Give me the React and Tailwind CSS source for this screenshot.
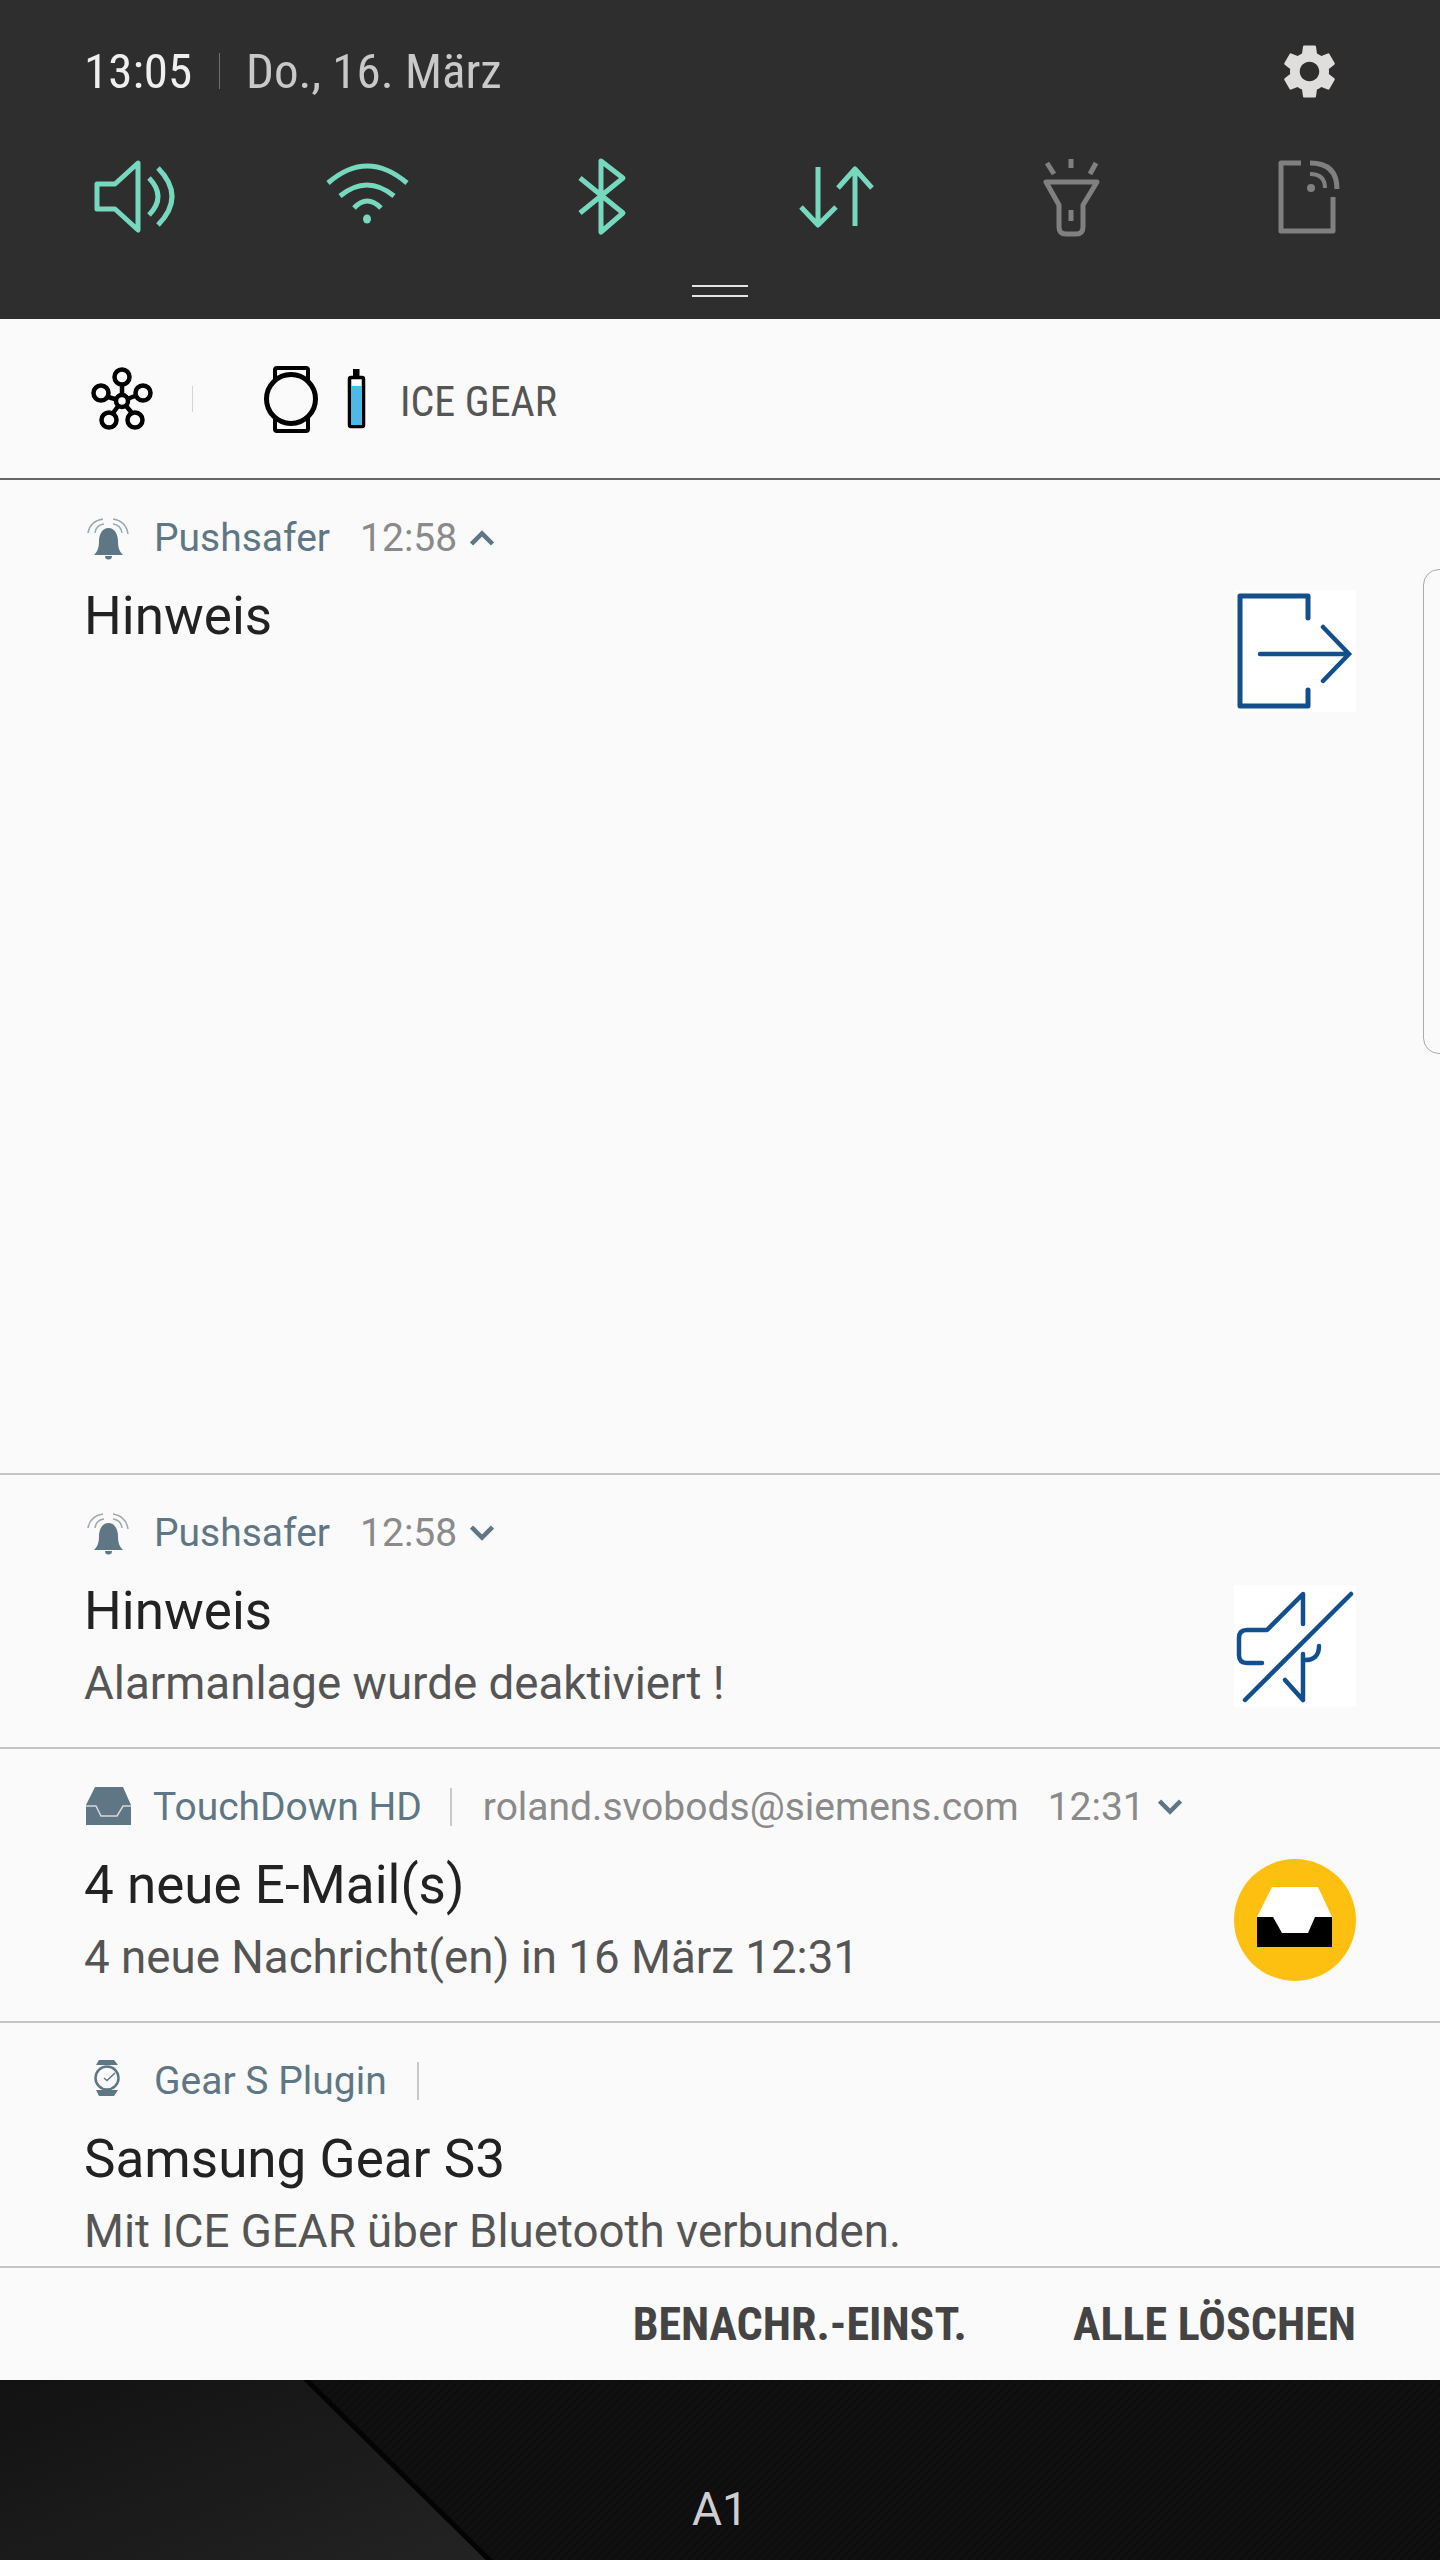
const BLUE = "#134f8c";
const SLATE = "#5f7785";
const MINT = "#76d8bd";
const GREY = "#808080";

function QuickIcon({ children, stroke }) {
  return (
    <div className="flex w-[234px] justify-center">
      <svg width="100" height="100" viewBox="0 0 100 100" fill="none" stroke={stroke} strokeWidth="5" strokeLinejoin="round">
        {children}
      </svg>
    </div>
  );
}

function Gear() {
  return (
    <svg width="65" height="65" viewBox="0 0 24 24" fill="#e0dddd">
      <path d="M19.14 12.94c.04-.3.06-.61.06-.94 0-.32-.02-.64-.07-.94l2.03-1.58a.49.49 0 0 0 .12-.61l-1.92-3.32a.488.488 0 0 0-.59-.22l-2.39.96c-.5-.38-1.03-.7-1.62-.94l-.36-2.54a.484.484 0 0 0-.48-.41h-3.84c-.24 0-.43.17-.47.41l-.36 2.54c-.59.24-1.13.57-1.62.94l-2.39-.96c-.22-.08-.47 0-.59.22L2.74 8.87c-.12.21-.08.47.12.61l2.03 1.58c-.05.3-.09.63-.09.94s.02.64.07.94l-2.03 1.58a.49.49 0 0 0-.12.61l1.92 3.32c.12.22.37.29.59.22l2.39-.96c.5.38 1.03.7 1.62.94l.36 2.54c.05.24.24.41.48.41h3.84c.24 0 .44-.17.47-.41l.36-2.54c.59-.24 1.13-.56 1.62-.94l2.39.96c.22.08.47 0 .59-.22l1.92-3.32c.12-.22.07-.47-.12-.61l-2.01-1.58zM12 15.6c-1.98 0-3.6-1.62-3.6-3.6s1.62-3.6 3.6-3.6 3.6 1.62 3.6 3.6-1.62 3.6-3.6 3.6z" />
    </svg>
  );
}

function Header() {
  return (
    <div className="h-[319px] bg-[#2e2e2e] flex flex-col">
      <div className="h-[147px] pt-[38px] pl-[84px] pr-[100px] flex items-start">
        <div className="flex items-center h-[66px] w-full">
          <span className="text-[49px] leading-[68px] mt-[2px] text-[#efefef] w-[105px] [font-stretch:75%] whitespace-nowrap">13:05</span>
          <span className="w-px h-[36px] bg-[#6f6f6f] ml-[30px]" />
          <span className="text-[49px] leading-[68px] mt-[2px] text-[#c9c9c9] ml-[26px] [font-stretch:75%] whitespace-nowrap">Do., 16. März</span>
          <div className="ml-auto -mr-[2px]"><Gear /></div>
        </div>
      </div>
      <div className="flex h-[100px] pl-[16px]">
        <QuickIcon stroke={MINT}>
          <path d="M55 16 L32 37 H14 V62 H32 L55 83 Z" />
          <path d="M66 31 Q84 49.5 66 68" />
          <path d="M75 21 Q103 49.5 75 78" />
        </QuickIcon>
        <QuickIcon stroke={MINT}>
          <path d="M11 36 Q50 2 90 36" />
          <path d="M23 49 Q50 27 77 49" />
          <path d="M37 61 Q50 47 64 61" />
          <ellipse cx="50" cy="72" rx="4" ry="4.5" fill={MINT} stroke="none" />
        </QuickIcon>
        <QuickIcon stroke={MINT}>
          <path d="M29 31 L72 66 L50 85 V14 L72 31 L29 66" />
        </QuickIcon>
        <QuickIcon stroke={MINT}>
          <path d="M33 20 V78 M16 60 L33 78 L51 60" />
          <path d="M70 22 V79 M53 41 L70 22 L87 41" />
        </QuickIcon>
        <QuickIcon stroke={GREY}>
          <path d="M52 12 V21 M28 16 L35 27 M77 16 L71 27" />
          <path d="M27 35 H78 L64 58 V80 Q64 87 57 87 H47 Q40 87 40 80 V58 Z" />
          <path d="M52 63 V74" />
        </QuickIcon>
        <QuickIcon stroke={GREY}>
          <path d="M48 16 H28 V84 H80 V50" />
          <path d="M57 16 Q84 16 84 42" />
          <path d="M57 27 Q72 27 72 41" strokeWidth="4" />
          <circle cx="58" cy="41" r="4" fill={GREY} stroke="none" />
        </QuickIcon>
      </div>
      <div className="mt-[38px] mx-auto w-[56px] h-[12px] border-y-[2px] border-[#e4e4e4]" />
    </div>
  );
}

function GearBar() {
  return (
    <div className="h-[161px] bg-[#fafafa] border-b-2 border-[#666] flex items-start pt-[40px] pl-[80px]">
      <svg width="84" height="80" viewBox="80 360 84 80" fill="none" stroke="#000" strokeWidth="4.5">
        <path d="M122 402 V385 M122 402 L135 397 M122 402 L108 398 M122 402 L113 414 M122 402 L132 414" />
        <circle cx="122" cy="402" r="6" fill="#fafafa" />
        <circle cx="122" cy="378" r="7.5" />
        <circle cx="143" cy="394" r="7.5" />
        <circle cx="101" cy="394" r="7.5" />
        <circle cx="109" cy="421" r="7.5" />
        <circle cx="135" cy="421" r="7.5" />
      </svg>
      <span className="w-px h-[26px] bg-[#d4d4d4] ml-[28px] mt-[27px]" />
      <svg width="120" height="80" viewBox="255 360 120 80" fill="none" stroke="#000" className="ml-[62px]">
        <rect x="275" y="369" width="33" height="63" rx="2" strokeWidth="4" />
        <circle cx="291" cy="400" r="24.5" strokeWidth="5" fill="#fafafa" />
        <rect x="349.5" y="378.5" width="14" height="49" rx="1.5" strokeWidth="3.5" fill="#fafafa" />
        <rect x="353" y="370" width="6.5" height="8" fill="#000" stroke="none" />
        <rect x="351" y="387" width="11" height="39" fill="#4fb9e5" stroke="none" />
      </svg>
      <span className="ml-[25px] mt-[16px] text-[42px] leading-[54px] text-[#555] [font-stretch:75%] whitespace-nowrap">ICE GEAR</span>
    </div>
  );
}

function Bell() {
  return (
    <svg width="80" height="70" viewBox="0 0 80 70" className="shrink-0">
      <path d="M38.5 25 C32 25 29 32 29 38 C29 44 28 48 24 52 H53 C49 48 48 44 48 38 C48 32 45 25 38.5 25Z M35 53 H42 A3.5 3.5 0 0 1 35 53Z" fill={SLATE} />
      <g fill="none" stroke="#9aa7af" strokeWidth="1.5">
        <path d="M18 30 Q20 18 33 16" />
        <path d="M25 30 Q26 22 34 21" />
        <path d="M43 16 Q56 18 58 31" />
        <path d="M43 21 Q51 22 52 30" />
      </g>
    </svg>
  );
}

function Tray() {
  return (
    <svg width="80" height="60" viewBox="0 0 80 60" className="shrink-0">
      <path d="M25 10 H53 L61 28 V48 H16 V28 Z" fill={SLATE} />
      <path d="M16 29 H26 L31 39 H47 L53 29 H61" fill="none" stroke="#d2dade" strokeWidth="1.5" />
    </svg>
  );
}

function WatchIcon() {
  return (
    <svg width="80" height="60" viewBox="0 0 80 60" className="shrink-0">
      <g transform="translate(10 0)">
        <path d="M19 9 H34 L38 14 H16 Z M16 39 H38 L34 45 H19 Z" fill={SLATE} />
        <circle cx="27" cy="27" r="11.5" fill="#fafafa" stroke={SLATE} strokeWidth="2.5" />
        <path d="M24 27 L27 29.5 L35 22" fill="none" stroke={SLATE} strokeWidth="1.5" />
      </g>
    </svg>
  );
}

function Chevron({ up }) {
  return (
    <svg width="24" height="16" viewBox="0 0 24 16" fill="none" stroke={SLATE} strokeWidth="4.5" className="ml-[13px]">
      <path d={up ? "M1.5 14 L12 3.5 L22.5 14" : "M1.5 2 L12 12.5 L22.5 2"} />
    </svg>
  );
}

function LogoutPic() {
  return (
    <svg width="122" height="122" viewBox="0 0 122 122" fill="none" stroke={BLUE} strokeWidth="5" strokeLinecap="round" className="bg-white block">
      <path d="M74 28 V6 H6 V116 H74 V100" strokeLinejoin="round" />
      <path d="M26 64 H115 M89 37 L115 64 L89 91" strokeWidth="4.5" />
    </svg>
  );
}

function MutePic() {
  return (
    <svg width="122" height="122" viewBox="0 0 122 122" fill="none" stroke={BLUE} strokeWidth="4.5" strokeLinecap="round" strokeLinejoin="round" className="bg-white block">
      <path d="M117 9 L11 115" />
      <path d="M69 39 V9 L33 45 H13 Q5 45 5 53 V70 Q5 78 13 78 H28" />
      <path d="M51 95 L69 115 V69" />
      <path d="M69 75 Q85 76 85 61" />
    </svg>
  );
}

function TrayPic() {
  return (
    <svg width="122" height="122" viewBox="0 0 122 122" className="block">
      <circle cx="61" cy="61" r="61" fill="#fec010" />
      <rect x="23" y="58" width="75" height="30" fill="#000" />
      <path d="M38 28 H84 L98 58 H81 L74 74 H48 L39 58 H23 Z" fill="#fff" />
    </svg>
  );
}

function Sep() {
  return <span className="block w-[2px] h-[38px] bg-[#c9c9c9]" />;
}

function Notification({ height, icon, head, title, text, pic }) {
  return (
    <div className="flex items-start bg-[#fafafa] border-b-2 border-[#c4c4c4] overflow-hidden" style={{ height }}>
      <div className="flex-1 min-w-0 pl-[84px]">
        <div className="h-[40px] mt-[38px] flex items-center -ml-[14px] text-[39px] leading-[40px] text-[#8a8a8a] whitespace-nowrap">
          {icon}
          {head}
        </div>
        <div className="mt-[28px] h-[60px] text-[53px] leading-[60px] text-[#222]">{title}</div>
        {text && <div className="mt-[13px] h-[60px] text-[45.7px] leading-[60px] text-[#555] whitespace-nowrap">{text}</div>}
      </div>
      <div className="pt-[110px] pr-[84px]">{pic}</div>
    </div>
  );
}

function Wallpaper() {
  return (
    <div className="relative h-[181px] bg-[repeating-linear-gradient(135deg,#0e0e0e_0px,#0e0e0e_3px,#101010_3px,#101010_6px)] flex items-start justify-center overflow-hidden">
      <svg width="1440" height="181" viewBox="0 0 1440 181" className="absolute left-0 top-0">
        <defs>
          <linearGradient id="wedge" x1="0" y1="0" x2="1" y2="1">
            <stop offset="0" stopColor="#121212" />
            <stop offset="1" stopColor="#232323" />
          </linearGradient>
        </defs>
        <polygon points="0,0 303,0 487,181 0,181" fill="url(#wedge)" />
        <polygon points="303,0 310,0 494,181 487,181" fill="#040404" />
      </svg>
      <span className="relative mt-[103px] text-[46px] leading-[52px] text-[#cfcfcf]">A1</span>
    </div>
  );
}

export default function App() {
  return (
    <div className="relative w-[1440px] h-[2560px] overflow-hidden bg-[#fafafa] font-['Roboto',sans-serif]">
      <Header />
      <GearBar />
      <Notification
        height={995}
        icon={<Bell />}
        head={<><span className="ml-[4px] text-[#5f7785]">Pushsafer</span><span className="ml-[30px]">12:58</span><Chevron up /></>}
        title="Hinweis"
        pic={<LogoutPic />}
      />
      <Notification
        height={274}
        icon={<Bell />}
        head={<><span className="ml-[4px] text-[#5f7785]">Pushsafer</span><span className="ml-[30px]">12:58</span><Chevron /></>}
        title="Hinweis"
        text="Alarmanlage wurde deaktiviert !"
        pic={<MutePic />}
      />
      <Notification
        height={274}
        icon={<Tray />}
        head={<><span className="ml-[3px] text-[#5f7785]">TouchDown HD</span><span className="ml-[28px] mr-[31px]"><Sep /></span><span>roland.svobods@siemens.com</span><span className="ml-[29px]">12:31</span><Chevron /></>}
        title="4 neue E-Mail(s)"
        text="4 neue Nachricht(en) in 16 März 12:31"
        pic={<TrayPic />}
      />
      <Notification
        height={245}
        icon={<WatchIcon />}
        head={<><span className="ml-[4px] text-[#5f7785]">Gear S Plugin</span><span className="ml-[30px]"><Sep /></span></>}
        title="Samsung Gear S3"
        text="Mit ICE GEAR über Bluetooth verbunden."
      />
      <div className="h-[112px] bg-[#fafafa] flex items-center justify-end pr-[84px] text-[46px] font-bold text-[#444] [font-stretch:75%] whitespace-nowrap">
        <span>BENACHR.-EINST.</span>
        <span className="ml-[106px]">ALLE LÖSCHEN</span>
      </div>
      <Wallpaper />
      <div className="absolute left-[1423px] top-[569px] w-[30px] h-[485px] border border-[#aaa] rounded-l-[16px]" />
    </div>
  );
}
